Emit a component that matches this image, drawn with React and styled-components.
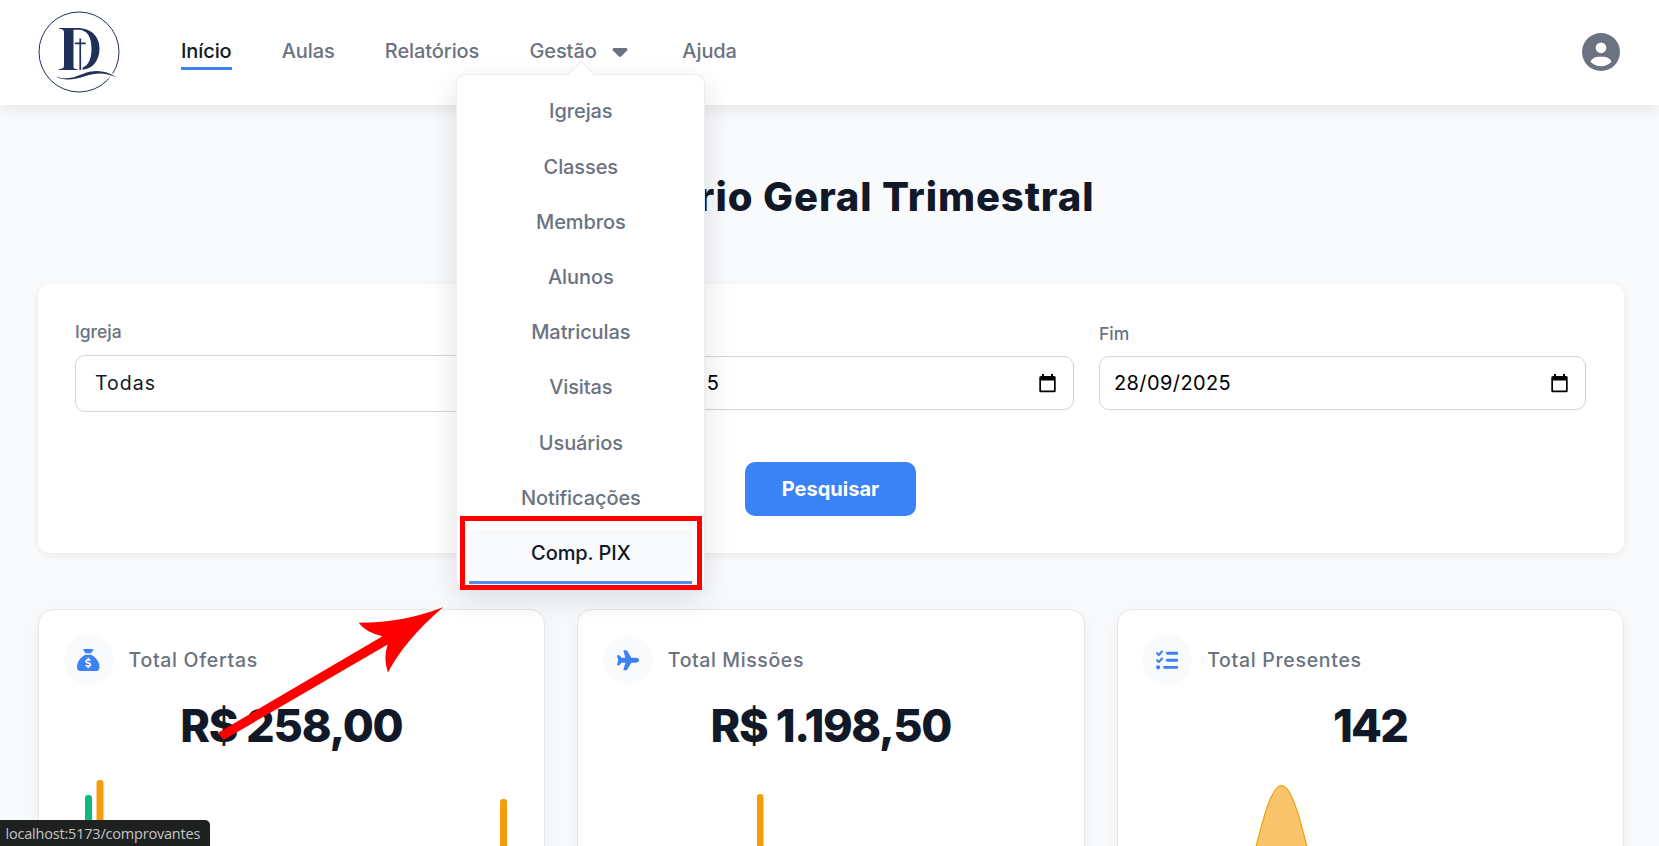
import React from "react";
import styled, { createGlobalStyle } from "styled-components";
import { FaCircleUser, FaSackDollar, FaPlane, FaListCheck, FaCaretDown } from "react-icons/fa6";

const Global = createGlobalStyle`
  *, *::before, *::after { box-sizing: border-box; }
  html, body { margin: 0; height: 100%; overflow: hidden; }
  body { background: #f9fafb; font-family: Inter, "Liberation Sans", sans-serif; color: #111827; }
`;

const Page = styled.div`
  position: relative;
  height: 846px;
  overflow: hidden;
  background: #f9fafb;
`;

const Header = styled.header`
  position: relative;
  z-index: 2;
  display: flex;
  align-items: center;
  height: 105px;
  padding: 0 39.5px 2px 37.5px;
  background: #fff;
  box-shadow: 0 5px 15px rgba(0, 0, 0, 0.08);
`;

const Logo = styled.svg`
  display: block;
  width: 82px;
  height: 82px;
  margin-right: 61.5px;
`;

const Nav = styled.nav`
  display: flex;
  align-items: center;
  flex: 1;
  gap: 50.2px;
  padding-bottom: 1px;
`;

const NavItem = styled.div`
  position: relative;
  display: flex;
  align-items: center;
  height: 37px;
  font-size: 20px;
  font-weight: 500;
  letter-spacing: -0.1px;
  color: ${(p) => (p.$active ? "#111827" : "#6b7280")};
  border-bottom: 3px solid ${(p) => (p.$active ? "#3b82f6" : "transparent")};
  border-top: 3px solid transparent;
  svg { margin: 0 0 0 11.5px; }
`;

const Menu = styled.div`
  position: absolute;
  top: 38px;
  left: 50%;
  margin-left: -124.5px;
  width: 249px;
  display: flex;
  flex-direction: column;
  gap: 7.2px;
  padding: 12.9px 12px 11px;
  background: #fff;
  border: 1px solid #ececee;
  border-radius: 10px;
  box-shadow: 0 10px 30px rgba(0, 0, 0, 0.12);
  &::before {
    content: "";
    position: absolute;
    top: -10px;
    left: 50%;
    width: 20px;
    height: 20px;
    margin-left: -10px;
    background: #fff;
    border: solid #ececee;
    border-width: 1px 0 0 1px;
    transform: rotate(45deg);
  }
`;

const MenuItem = styled.a`
  position: relative;
  display: flex;
  align-items: center;
  justify-content: center;
  height: 48px;
  border-radius: 8px;
  color: ${(p) => (p.$active ? "#111827" : "#6b7280")};
  background: ${(p) => (p.$active ? "#f9fafb" : "transparent")};
`;

const Underline = styled.span`
  position: absolute;
  left: 0;
  right: 0;
  bottom: -7px;
  height: 3px;
  background: #4f8ff4;
`;

const Highlight = styled.span`
  position: absolute;
  inset: -13px -10px -13px -9px;
  border: 5px solid #ff0000;
`;

const Main = styled.main`
  padding: 0 35px 0 38px;
`;

const Title = styled.h1`
  margin: 0;
  padding-top: 59.5px;
  height: 179px;
  line-height: 64px;
  text-align: center;
  font-size: 40px;
  font-weight: 800;
  letter-spacing: 0.9px;
`;

const FilterCard = styled.section`
  display: flex;
  flex-direction: column;
  align-items: center;
  height: 269px;
  padding: 37px 38px 37px 37px;
  background: #fff;
  border-radius: 12px;
  box-shadow: 0 2px 8px rgba(0, 0, 0, 0.07);
`;

const Fields = styled.div`
  display: grid;
  grid-template-columns: repeat(3, 1fr);
  gap: 25px;
  width: 100%;
  height: 141px;
`;

const Field = styled.label`
  display: flex;
  flex-direction: column;
  gap: ${(p) => (p.$date ? 11 : 12)}px;
  padding-top: ${(p) => (p.$date ? 2 : 0)}px;
  font-size: 17.5px;
  line-height: 22px;
  font-weight: 500;
  color: #6b7280;
`;

const Control = styled.div`
  display: flex;
  align-items: center;
  justify-content: space-between;
  height: ${(p) => (p.$date ? 54 : 57)}px;
  padding: 0 ${(p) => (p.$date ? 17 : 20)}px ${(p) => (p.$date ? 0 : 2)}px ${(p) => (p.$date ? 14 : 19)}px;
  border: 1px solid #d1d5db;
  border-radius: 10px;
  font-size: ${(p) => (p.$date ? 20 : 19.5)}px;
  font-weight: 400;
  letter-spacing: ${(p) => (p.$date ? 0.4 : 1)}px;
  color: ${(p) => (p.$date ? "#000" : "#111827")};
`;

const SearchButton = styled.button`
  width: 171px;
  height: 54px;
  border: 0;
  border-radius: 10px;
  background: #3b82f6;
  color: #fff;
  font: 700 20px Inter, sans-serif;
`;

const Stats = styled.section`
  display: grid;
  grid-template-columns: repeat(3, 1fr);
  gap: 32px;
  padding-top: 56px;
`;

const StatCard = styled.article`
  height: 400px;
  padding: 25px 25px 25px 24.5px;
  background: #fff;
  border: 1px solid #e5e7eb;
  border-radius: 15px;
  box-shadow: 0 5px 20px rgba(0, 0, 0, 0.05);
`;

const StatHead = styled.div`
  display: flex;
  align-items: center;
  gap: 15px;
  font-size: 19.5px;
  font-weight: 500;
  letter-spacing: ${(p) => p.$track}px;
  color: #6b7280;
`;

const IconDisc = styled.span`
  display: flex;
  align-items: center;
  justify-content: center;
  width: 50px;
  height: 50px;
  border-radius: 50%;
  background: #f9fafb;
  color: #3b82f6;
`;

const StatValue = styled.div`
  height: 82px;
  line-height: 82px;
  text-align: center;
  font-size: 45px;
  font-weight: 800;
  letter-spacing: ${(p) => p.$track}px;
`;

const Chart = styled.svg`
  display: block;
  width: 100%;
  height: 200px;
  overflow: visible;
`;

const StatusBar = styled.div`
  position: absolute;
  z-index: 4;
  left: 0;
  bottom: 0;
  width: 210px;
  height: 26px;
  padding-left: 5.5px;
  border-top-right-radius: 5px;
  background: #1f2121;
  color: #c3c6c6;
  font: 14.5px/27px "Open Sans", "Noto Sans", sans-serif;
  letter-spacing: -0.2px;
  white-space: nowrap;
`;

const Pointer = styled.svg`
  position: absolute;
  z-index: 3;
  left: 210px;
  top: 600px;
  width: 240px;
  height: 150px;
`;

const CalendarIcon = () => (
  <svg width="17" height="19" viewBox="0 0 17 19">
    <path fill="#000" fillRule="evenodd" d="M3 0h2v2h7V0h2v2h1.2a1.5 1.5 0 0 1 1.5 1.5v13.2a1.5 1.5 0 0 1-1.5 1.5H1.8a1.5 1.5 0 0 1-1.5-1.5V3.500a1.500 1.500 0 0 1 1.500-1.500H3zM2 6.500v10h13v-10z" />
  </svg>
);

const LogoMark = () => (
  <Logo viewBox="0 0 82 82" fill="#1f3158">
    <circle cx="41" cy="41" r="40" fill="none" stroke="#1f3158" strokeWidth="1" />
    <path d="M21 17h18c15 0 22.500 9 22.500 20.500S55 58 44.500 58.800v-2C51 54 53.500 47 53.500 37.500c0-11-4-18.800-13-18.800h-5V56c0 1.500.8 2 4 2.300v.8H21v-.9c3.500-.4 5-1 5-3.200V21c0-2-1.500-2.900-5-3.200z" />
    <path d="M41.400 27.500h1.700v4h4.600v1.800h-4.600v25.800h-1.700V33.300h-4.600v-1.800h4.600z" />
    <path d="M74.500 62.500L71.500 68.500" stroke="#fff" strokeWidth="2" />
    <path d="M18 65.500c9 3.500 17 1.500 26-2.200 12-4.800 23-4.600 34.500 3.200C68 61.500 58 61.500 47.500 65 37 68.600 26 70.500 18 65.500z" />
  </Logo>
);

const MENU = ["Igrejas", "Classes", "Membros", "Alunos", "Matriculas", "Visitas", "Usuários", "Notificações", "Comp. PIX"];

export default function App() {
  return (
    <Page>
      <Global />
      <Header>
        <LogoMark />
        <Nav>
          <NavItem $active>Início</NavItem>
          <NavItem>Aulas</NavItem>
          <NavItem>Relatórios</NavItem>
          <NavItem>
            Gestão <FaCaretDown size={24} />
            <Menu>
              {MENU.map((label) => {
                const active = label === "Comp. PIX";
                return (
                  <MenuItem key={label} $active={active}>
                    {label}
                    {active && <Underline />}
                    {active && <Highlight />}
                  </MenuItem>
                );
              })}
            </Menu>
          </NavItem>
          <NavItem>Ajuda</NavItem>
        </Nav>
        <FaCircleUser size={38} color="#6b7280" />
      </Header>

      <Main>
        <Title>Relatório Geral Trimestral</Title>
        <FilterCard>
          <Fields>
            <Field>
              Igreja
              <Control>Todas</Control>
            </Field>
            <Field $date>
              Início
              <Control $date>29/06/2025<CalendarIcon /></Control>
            </Field>
            <Field $date>
              Fim
              <Control $date>28/09/2025<CalendarIcon /></Control>
            </Field>
          </Fields>
          <SearchButton>Pesquisar</SearchButton>
        </FilterCard>

        <Stats>
          <StatCard>
            <StatHead $track={0.7}><IconDisc><FaSackDollar size={22.5} /></IconDisc>Total Ofertas</StatHead>
            <StatValue $track={-1.2}>R$ 258,00</StatValue>
            <Chart>
              <rect x="21" y="28" width="7" height="160" rx="3" fill="#10b981" />
              <rect x="32.500" y="13" width="7" height="180" rx="3" fill="#f59e0b" />
              <rect x="436" y="32" width="7" height="160" rx="3" fill="#f59e0b" />
            </Chart>
          </StatCard>
          <StatCard>
            <StatHead $track={0.6}><IconDisc><FaPlane size={22.5} /></IconDisc>Total Missões</StatHead>
            <StatValue $track={-1.4}>R$ 1.198,50</StatValue>
            <Chart>
              <rect x="154" y="27" width="6.500" height="160" rx="3" fill="#f59e0b" />
            </Chart>
          </StatCard>
          <StatCard>
            <StatHead $track={0.7}><IconDisc><FaListCheck size={22.5} /></IconDisc>Total Presentes</StatHead>
            <StatValue $track={-1.8}>142</StatValue>
            <Chart>
              <path d="M104 120C121 50 129 18.500 139.500 18.500S158 50 175 120z" fill="#f9c56c" stroke="#f59e0b" strokeWidth="1.200" />
            </Chart>
          </StatCard>
        </Stats>
      </Main>

      <Pointer viewBox="210 600 240 150">
        <path fill="#ff0000" d="M443 607.300Q403 623 358.600 622.700Q366 632.500 382.500 636.300L218 732.700L223.600 740L387.700 644.500Q383 658 387.900 672.500Q405 640 443 607.300z" />
      </Pointer>
      <StatusBar>localhost:5173/comprovantes</StatusBar>
    </Page>
  );
}
